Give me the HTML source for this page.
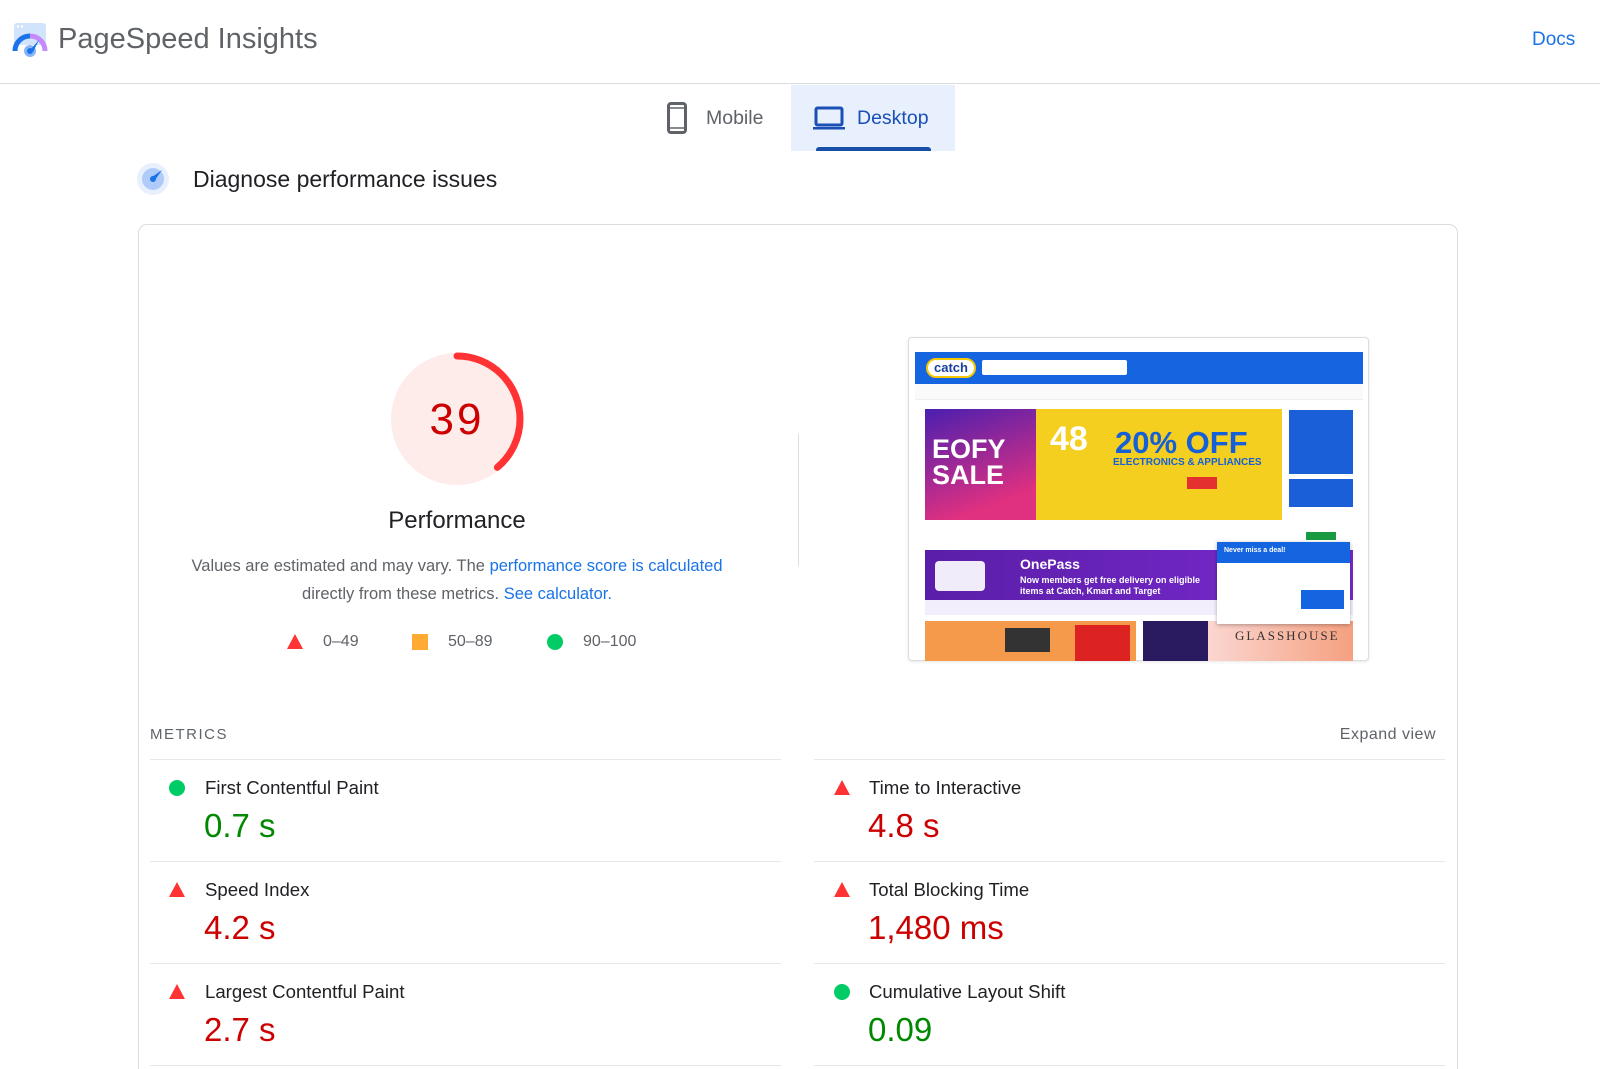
<!DOCTYPE html>
<html style="height:1069px;overflow:hidden"><head><meta charset="utf-8"><style>
*{margin:0;padding:0;box-sizing:border-box}
body{width:1600px;height:1069px;overflow:hidden;background:#fff;font-family:"Liberation Sans",Arial,sans-serif;position:relative;color:#202124}
.a{position:absolute}
.t{white-space:nowrap}
.hr{position:absolute;height:1px;background:#e8e8e8}
.mt{font-size:18.6px;color:#202124}
.mv{font-size:33px}
.red{color:#c00}.grn{color:#080}
.tri{width:0;height:0;border-left:8px solid transparent;border-right:8px solid transparent;border-bottom:15px solid #f33}
.dot{width:16px;height:16px;border-radius:50%;background:#0c6}
.b{position:absolute}
</style></head><body>
<svg class="a" style="left:12px;top:22px" width="36" height="36" viewBox="0 0 36 36">
<rect x="2" y="1" width="32" height="22" rx="3" fill="#d2e3fc"/>
<circle cx="6" cy="4.5" r="1.2" fill="#fff"/><circle cx="10" cy="4.5" r="1.2" fill="#fff"/>
<path d="M3 29 A15 15 0 0 1 18 14" stroke="#1a73e8" stroke-width="5" fill="none"/>
<path d="M18 14 A15 15 0 0 1 33 29" stroke="#c58af9" stroke-width="5" fill="none"/>
<circle cx="18" cy="29" r="6" fill="#8ab4f8"/><circle cx="18" cy="29" r="3" fill="#1a73e8"/>
<path d="M19 27 L27 18 L21 30 Z" fill="#1a73e8"/>
</svg>
<div class="a t" style="left:58px;top:23px;font-size:29px;color:#5f6368">PageSpeed Insights</div>
<div class="a t" style="left:1532px;top:29px;font-size:19px;color:#1a73e8">Docs</div>
<div class="hr" style="left:0;top:83px;width:1600px;background:#dadce0"></div>
<svg class="a" style="left:667px;top:102px" width="20" height="32" viewBox="0 0 20 32"><rect x="1.5" y="1.5" width="17" height="29" rx="2.5" fill="none" stroke="#5f6368" stroke-width="3"/><line x1="2" y1="6" x2="18" y2="6" stroke="#5f6368" stroke-width="1.5"/><line x1="2" y1="26" x2="18" y2="26" stroke="#5f6368" stroke-width="1.5"/></svg>
<div class="a t" style="left:706px;top:107px;font-size:19.5px;color:#5f6368">Mobile</div>
<div class="a" style="left:791px;top:85px;width:164px;height:66px;background:#e8f0fe"></div>
<svg class="a" style="left:813px;top:106px" width="32" height="24" viewBox="0 0 32 24"><rect x="3" y="2" width="26" height="17" rx="1.5" fill="none" stroke="#1a4fb5" stroke-width="3"/><rect x="0" y="21" width="32" height="2.5" fill="#1a4fb5"/></svg>
<div class="a t" style="left:857px;top:107px;font-size:19.5px;color:#1a4fb5">Desktop</div>
<div class="a" style="left:816px;top:147px;width:115px;height:4px;border-radius:3px 3px 0 0;background:#174ea6"></div>
<svg class="a" style="left:137px;top:163px" width="32" height="32" viewBox="0 0 32 32"><circle cx="16" cy="16" r="16" fill="#e8f0fe"/><circle cx="16" cy="16" r="11" fill="#aecbfa"/><circle cx="16" cy="16" r="3" fill="#1a73e8"/><path d="M15 14 L25 7 L18 17 Z" fill="#1a73e8"/></svg>
<div class="a t" style="left:193px;top:166px;font-size:23px;color:#202124">Diagnose performance issues</div>
<div class="a" style="left:138px;top:224px;width:1320px;height:860px;border:1px solid #dadce0;border-radius:9px"></div>
<svg class="a" style="left:385px;top:347px" width="144" height="144" viewBox="0 0 144 144">
<circle cx="72" cy="72" r="66" fill="#fdecea"/>
<circle cx="72" cy="72" r="63" fill="none" stroke="#f33" stroke-width="7" stroke-linecap="round" stroke-dasharray="154 500" transform="rotate(-90 72 72)"/>
</svg>
<div class="a t" style="left:397px;top:395px;width:120px;text-align:center;font-size:44px;letter-spacing:3px;color:#c00">39</div>
<div class="a t" style="left:357px;top:507px;width:200px;text-align:center;font-size:24px">Performance</div>
<div class="a t" style="left:157px;top:552px;width:600px;text-align:center;font-size:16.5px;color:#5f6368;line-height:28px">Values are estimated and may vary. The <span style="color:#1a73e8">performance score is calculated</span><br>directly from these metrics. <span style="color:#1a73e8">See calculator.</span></div>
<div class="a tri" style="left:287px;top:634px"></div>
<div class="a t" style="left:323px;top:633px;font-size:16px;color:#5f6368">0–49</div>
<div class="a" style="left:412px;top:634px;width:16px;height:16px;background:#fa3"></div>
<div class="a t" style="left:448px;top:633px;font-size:16px;color:#5f6368">50–89</div>
<div class="a dot" style="left:547px;top:634px"></div>
<div class="a t" style="left:583px;top:633px;font-size:16px;color:#5f6368">90–100</div>
<div class="a" style="left:798px;top:434px;width:1px;height:132px;background:#e0e0e0"></div>
<div class="a" style="left:908px;top:337px;width:461px;height:324px;border:1px solid #dadce0;border-radius:4px;background:#fff;overflow:hidden;box-shadow:0 1px 3px rgba(0,0,0,.1)"></div>
<div class="b" style="left:915px;top:352px;width:448px;height:32px;background:#1565e0"></div>
<div class="b" style="left:926px;top:358px;width:50px;height:20px;border-radius:10px;background:#fff;border:2px solid #f5c800;font:bold 13px 'Liberation Sans';color:#1a3f9e;text-align:center;line-height:16px">catch</div>
<div class="b" style="left:982px;top:360px;width:145px;height:15px;background:#fff;border-radius:2px"></div>
<div class="b" style="left:915px;top:384px;width:448px;height:16px;background:#fafafa;border-bottom:1px solid #eee"></div>
<div class="b" style="left:925px;top:409px;width:111px;height:111px;background:linear-gradient(160deg,#4a1fb0,#e03080 80%)"></div>
<div class="b t" style="left:932px;top:436px;font:900 27px/26px 'Liberation Sans';color:#fff">EOFY<br>SALE</div>
<div class="b" style="left:1036px;top:409px;width:246px;height:111px;background:#f5cf1f"></div>
<div class="b t" style="left:1050px;top:420px;font:900 34px 'Liberation Sans';color:#fff">48</div>
<div class="b t" style="left:1115px;top:425px;font:900 31px 'Liberation Sans';color:#1560d8">20% OFF</div>
<div class="b t" style="left:1113px;top:457px;font:bold 10px 'Liberation Sans';color:#1560d8">ELECTRONICS &amp; APPLIANCES</div>
<div class="b" style="left:1187px;top:477px;width:30px;height:12px;background:#e53030"></div>
<div class="b" style="left:925px;top:520px;width:357px;height:23px;background:#fff"></div>
<div class="b" style="left:1289px;top:410px;width:64px;height:64px;background:#1a5fd8"></div>
<div class="b" style="left:1289px;top:479px;width:64px;height:28px;background:#1a5fd8"></div>
<div class="b" style="left:1306px;top:532px;width:30px;height:8px;background:#1a9a40"></div>
<div class="b" style="left:925px;top:550px;width:428px;height:50px;background:linear-gradient(90deg,#5a1ea8,#7a2ad0)"></div>
<div class="b" style="left:935px;top:561px;width:50px;height:30px;background:#f1ecfa;border-radius:4px"></div>
<div class="b t" style="left:1020px;top:556px;font:bold 14px 'Liberation Sans';color:#fff">OnePass</div>
<div class="b t" style="left:1020px;top:575px;font:bold 9px/11px 'Liberation Sans';color:#fff">Now members get free delivery on eligible<br>items at Catch, Kmart and Target</div>
<div class="b" style="left:925px;top:600px;width:428px;height:15px;background:#f3eefb"></div>
<div class="b" style="left:925px;top:621px;width:211px;height:40px;background:#f5994a"></div>
<div class="b" style="left:1005px;top:628px;width:45px;height:24px;background:#333"></div>
<div class="b" style="left:1075px;top:625px;width:55px;height:36px;background:#d22"></div>
<div class="b" style="left:1143px;top:621px;width:65px;height:40px;background:#2a1a60"></div>
<div class="b" style="left:1208px;top:621px;width:145px;height:40px;background:linear-gradient(90deg,#fbd6d0,#f5a080)"></div>
<div class="b t" style="left:1235px;top:628px;font:13px 'Liberation Serif';letter-spacing:2px;color:#333">GLASSHOUSE</div>
<div class="b" style="left:1217px;top:542px;width:133px;height:82px;background:#fff;box-shadow:0 1px 4px rgba(0,0,0,.3)"></div>
<div class="b" style="left:1217px;top:542px;width:133px;height:21px;background:#1565e0"></div>
<div class="b t" style="left:1224px;top:547px;font:bold 7px 'Liberation Sans';color:#fff">Never miss a deal!</div>
<div class="b" style="left:1301px;top:590px;width:43px;height:19px;background:#1565e0"></div>
<div class="a t" style="left:150px;top:726px;font-size:15px;letter-spacing:1.5px;color:#5f6368">METRICS</div>
<div class="a t" style="left:1330px;top:726px;width:106px;text-align:right;font-size:16px;letter-spacing:.5px;color:#5f6368">Expand view</div>
<div class="hr" style="left:150px;top:759px;width:631px"></div>
<div class="hr" style="left:814px;top:759px;width:631px"></div>
<div class="hr" style="left:150px;top:861px;width:631px"></div>
<div class="hr" style="left:814px;top:861px;width:631px"></div>
<div class="hr" style="left:150px;top:963px;width:631px"></div>
<div class="hr" style="left:814px;top:963px;width:631px"></div>
<div class="hr" style="left:150px;top:1065px;width:631px"></div>
<div class="hr" style="left:814px;top:1065px;width:631px"></div>
<div class="a dot" style="left:169px;top:780px"></div>
<div class="a t mt" style="left:205px;top:777px">First Contentful Paint</div>
<div class="a t mv grn" style="left:204px;top:807px">0.7 s</div>
<div class="a tri" style="left:834px;top:780px"></div>
<div class="a t mt" style="left:869px;top:777px">Time to Interactive</div>
<div class="a t mv red" style="left:868px;top:807px">4.8 s</div>
<div class="a tri" style="left:169px;top:882px"></div>
<div class="a t mt" style="left:205px;top:879px">Speed Index</div>
<div class="a t mv red" style="left:204px;top:909px">4.2 s</div>
<div class="a tri" style="left:834px;top:882px"></div>
<div class="a t mt" style="left:869px;top:879px">Total Blocking Time</div>
<div class="a t mv red" style="left:868px;top:909px">1,480 ms</div>
<div class="a tri" style="left:169px;top:984px"></div>
<div class="a t mt" style="left:205px;top:981px">Largest Contentful Paint</div>
<div class="a t mv red" style="left:204px;top:1011px">2.7 s</div>
<div class="a dot" style="left:834px;top:984px"></div>
<div class="a t mt" style="left:869px;top:981px">Cumulative Layout Shift</div>
<div class="a t mv grn" style="left:868px;top:1011px">0.09</div>
</body></html>
